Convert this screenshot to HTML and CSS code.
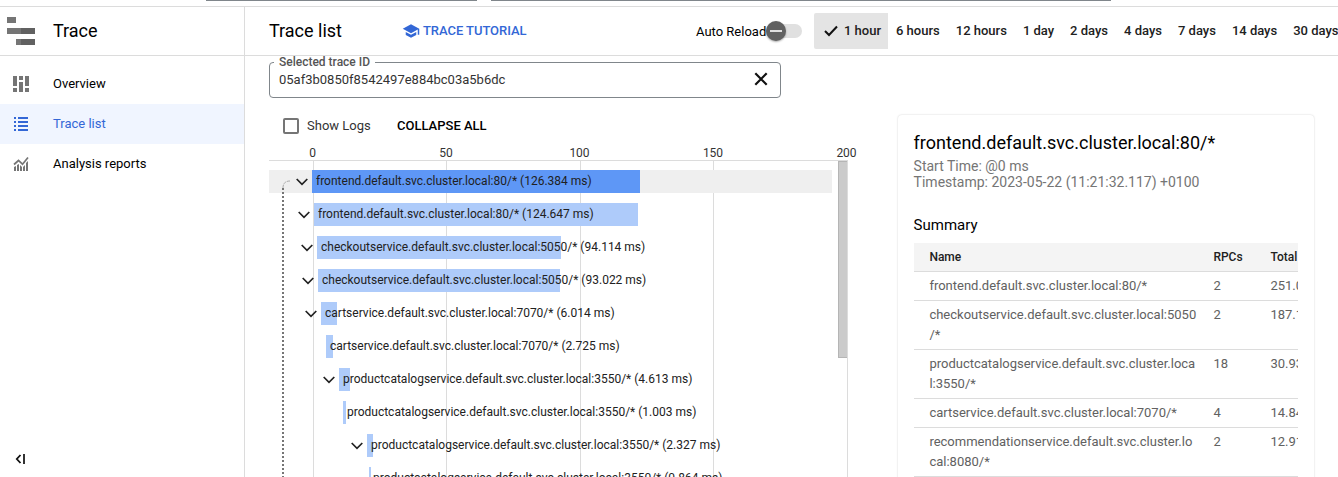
FILE: index.html
```html
<!DOCTYPE html>
<html lang="en">
<head>
<meta charset="utf-8">
<title>Trace list</title>
<link rel="stylesheet" href="styles.css">
</head>
<body>
<div class="topbar"><span class="topbar-project"></span><span class="topbar-search"></span></div>
<div class="shell">
  <nav class="sidebar">
    <div class="product">
      <svg class="product-logo" width="28" height="28" shape-rendering="crispEdges"><path fill="#757575" d="M0 0h9v6H0zM0 11h14v6H0zM9 22h5v6H9z"/><path fill="#616161" d="M14 11h14v6H14zM14 22h14v6H14z"/></svg>
      <span>Trace</span>
    </div>
    <ul class="nav">
      <li class="nav-item">
        <svg width="16" height="16" fill="#757575" shape-rendering="crispEdges"><path d="M0 0h4v10H0zM0 12h4v4H0zM6 0h4v4H6zM6 6h4v10H6zM12 0h4v10h-4zM12 12h4v4h-4z"/></svg>
        <span>Overview</span>
      </li>
      <li class="nav-item active">
        <svg width="16" height="16" fill="#3367d6" shape-rendering="crispEdges"><path d="M1 1h2v2H1zM5 1h10v2H5zM1 5h2v2H1zM5 5h10v2H5zM1 9h2v2H1zM5 9h10v2H5zM1 13h2v2H1zM5 13h10v2H5z"/></svg>
        <span>Trace list</span>
      </li>
      <li class="nav-item">
        <svg width="16" height="16" fill="#757575"><path d="M1 11l2-1v5H1zM4 9l2-1v7H4zM7 9l2 2v4H7zM10 11l2-2v6h-2zM13 7l2-2v10h-2z"/><path d="M1 8.500l4.500-4 4 3.700L15 1.500" fill="none" stroke="#757575" stroke-width="1.700"/></svg>
        <span>Analysis reports</span>
      </li>
    </ul>
    <svg class="collapse" width="12" height="10"><path d="M5.500 1L1.800 5l3.700 4" fill="none" stroke="#111" stroke-width="1.800"/><path d="M8 0h2v10H8z" fill="#333"/></svg>
  </nav>
  <main class="main">
    <header class="header">
      <h1>Trace list</h1>
      <a class="tutorial">
        <svg width="18" height="18" viewBox="0 0 24 24" fill="#3367d6"><path d="M5 13.180v4L12 21l7-3.820v-4L12 17l-7-3.820zM12 3L1 9l11 6 9-4.910V17h2V9L12 3z"/></svg>
        <span>TRACE TUTORIAL</span>
      </a>
      <span class="reload">Auto Reload</span>
      <span class="toggle"><span class="knob"></span></span>
      <div class="ranges">
        <span class="range selected"><svg width="14" height="12"><path d="M1 6l4 4 8-8.500" fill="none" stroke="#111" stroke-width="2"/></svg>1 hour</span>
        <span class="range">6 hours</span><span class="range">12 hours</span><span class="range">1 day</span><span class="range">2 days</span><span class="range">4 days</span><span class="range">7 days</span><span class="range">14 days</span><span class="range">30 days</span>
      </div>
    </header>
    <div class="content">
      <section class="trace">
        <fieldset class="field">
          <legend>Selected trace ID</legend>
          <span>05af3b0850f8542497e884bc03a5b6dc</span>
          <svg width="14" height="14"><path d="M1.300 1.300l11.400 11.400M12.700 1.300L1.300 12.700" stroke="#111" stroke-width="2.200"/></svg>
        </fieldset>
        <div class="options"><span class="checkbox"></span><span class="logs">Show Logs</span><span class="collapse-all">COLLAPSE ALL</span></div>
        <div class="axis"><span>0</span><span>50</span><span>100</span><span>150</span><span>200</span></div>
        <div class="chart">
          <div class="rows">
            <div class="row current"><span class="lead" style="width:43px"><svg class="chev"><use href="#chev"/></svg></span><span class="bar" style="width:328px">frontend.default.svc.cluster.local:80/* (126.384 ms)</span></div>
            <div class="row"><span class="lead" style="width:45px"><svg class="chev"><use href="#chev"/></svg></span><span class="bar" style="width:324px">frontend.default.svc.cluster.local:80/* (124.647 ms)</span></div>
            <div class="row"><span class="lead" style="width:48px"><svg class="chev"><use href="#chev"/></svg></span><span class="bar" style="width:244px">checkoutservice.default.svc.cluster.local:5050/* (94.114 ms)</span></div>
            <div class="row"><span class="lead" style="width:49px"><svg class="chev"><use href="#chev"/></svg></span><span class="bar" style="width:242px">checkoutservice.default.svc.cluster.local:5050/* (93.022 ms)</span></div>
            <div class="row"><span class="lead" style="width:52px"><svg class="chev"><use href="#chev"/></svg></span><span class="bar" style="width:16px">cartservice.default.svc.cluster.local:7070/* (6.014 ms)</span></div>
            <div class="row"><span class="lead" style="width:57px"></span><span class="bar" style="width:7px">cartservice.default.svc.cluster.local:7070/* (2.725 ms)</span></div>
            <div class="row"><span class="lead" style="width:70px"><svg class="chev"><use href="#chev"/></svg></span><span class="bar" style="width:11px">productcatalogservice.default.svc.cluster.local:3550/* (4.613 ms)</span></div>
            <div class="row"><span class="lead" style="width:74px"></span><span class="bar narrow" style="width:3px">productcatalogservice.default.svc.cluster.local:3550/* (1.003 ms)</span></div>
            <div class="row"><span class="lead" style="width:98px"><svg class="chev"><use href="#chev"/></svg></span><span class="bar" style="width:6px">productcatalogservice.default.svc.cluster.local:3550/* (2.327 ms)</span></div>
            <div class="row"><span class="lead" style="width:100px"></span><span class="bar narrow" style="width:2px">productcatalogservice.default.svc.cluster.local:3550/* (0.864 ms)</span></div>
          </div>
          <span class="scroll-thumb"></span>
          <svg class="connector" width="10" height="300"><path d="M9 1Q2 1 2 8" fill="none" stroke="#aaa" stroke-dasharray="3 1"/><path d="M2 8V300" stroke="#757575" stroke-width="2" stroke-dasharray="2 2"/></svg>
        </div>
      </section>
      <aside class="details">
        <h2>frontend.default.svc.cluster.local:80/*</h2>
        <p class="meta">Start Time: @0 ms<br>Timestamp: 2023-05-22 (11:21:32.117) +0100</p>
        <h3>Summary</h3>
        <div class="table">
          <div class="tr th"><span>Name</span><span>RPCs</span><span>Total</span></div>
          <div class="tr"><span>frontend.default.svc.cluster.local:80/*</span><span>2</span><span>251.031</span></div>
          <div class="tr"><span>checkoutservice.default.svc.cluster.local:5050/*</span><span>2</span><span>187.136</span></div>
          <div class="tr"><span>productcatalogservice.default.svc.cluster.local:3550/*</span><span>18</span><span>30.930</span></div>
          <div class="tr"><span>cartservice.default.svc.cluster.local:7070/*</span><span>4</span><span>14.840</span></div>
          <div class="tr"><span>recommendationservice.default.svc.cluster.local:8080/*</span><span>2</span><span>12.910</span></div>
        </div>
      </aside>
    </div>
  </main>
</div>
<svg class="defs" width="0" height="0"><symbol id="chev" viewBox="0 0 12 8"><path d="M.700 1L6 6.300 11.300 1" fill="none" stroke="#212121" stroke-width="1.700"/></symbol></svg>
</body>
</html>
```
FILE: styles.css
```css
* { box-sizing: border-box; }
body { margin: 0; width: 1338px; height: 477px; overflow: hidden; background: #fff; color: #000; font: 13px/16px Roboto, sans-serif; white-space: nowrap; }
svg { display: block; flex: none; }
.defs { position: absolute; }
.topbar { height: 7px; border-bottom: 1px solid #dcdcdc; display: flex; gap: 14px; padding-left: 206px; }
.topbar-project, .topbar-search { height: 1px; background: #80868b; }
.topbar-project { width: 271px; }
.topbar-search { width: 620px; }
.shell { display: flex; height: 470px; }
.sidebar { width: 245px; flex: none; border-right: 1px solid #dcdcdc; display: flex; flex-direction: column; }
.product { height: 49px; border-bottom: 1px solid #dcdcdc; display: flex; align-items: center; padding-left: 7px; gap: 18px; font-size: 18px; }
.nav { list-style: none; margin: 8px 0 0; padding: 0; }
.nav-item { height: 40px; display: flex; align-items: center; padding-left: 13px; gap: 24px; }
.active { background: #f0f5ff; color: #3367d6; }
.collapse { margin: auto 0 13px 15px; }
.main { width: 1093px; flex: none; overflow: hidden; }
.header { height: 49px; border-bottom: 1px solid #dcdcdc; display: flex; align-items: center; padding-left: 24px; }
h1 { font-size: 18px; font-weight: 400; margin: 0; width: 133px; flex: none; }
.tutorial { display: flex; align-items: center; gap: 3px; color: #3367d6; font-weight: 500; width: 294px; flex: none; letter-spacing: -.05px; }
.reload { width: 70px; padding-top: 1px; flex: none; }
.toggle { width: 36px; height: 14px; border-radius: 7px; background: #e0e0e0; display: flex; align-items: center; flex: none; }
.knob { width: 20px; height: 20px; border-radius: 50%; background: #616161; box-shadow: 0 1px 2px #0005; flex: none; display: flex; align-items: center; justify-content: center; }
.knob::after { content: ""; width: 12px; height: 2px; background: #e0e0e0; }
.ranges { display: flex; margin-left: 12px; font-weight: 500; color: #212121; flex: none; }
.range { height: 36px; display: flex; align-items: center; padding: 0 8px; flex: none; }
.selected { background: #e4e4e4; border-radius: 2px 0 0 2px; padding-left: 10px; gap: 6px; width: 74px; }
.content { display: flex; height: 421px; }
.trace { width: 579px; margin-left: 24px; flex: none; }
.field { margin: -1px 0 0; width: 512px; height: 43px; border: 1px solid #80868b; border-radius: 4px; padding: 3px 12px 0 9px; display: flex; justify-content: space-between; color: #333; }
.field legend { font-size: 12px; line-height: 14px; font-weight: 500; padding: 0 5px; margin-left: -5px; color: #555; }
.options { display: flex; align-items: center; height: 16px; margin: 20px 0 19px 14px; }
.checkbox { width: 16px; height: 16px; border: 2px solid #757575; border-radius: 2px; margin-right: 8px; }
.logs { width: 90px; color: #333; }
.collapse-all { font-weight: 500; }
.axis { display: grid; grid-template-columns: 133px 134px 133px 134px 133px; margin-left: -23px; width: 667px; height: 7px; font-size: 12px; line-height: 0; text-align: center; color: #333; }
.chart { position: relative; height: 317px; border-top: 1px solid #dcdcdc; background: linear-gradient(#dcdcdc, #dcdcdc) 44px 0/1px 100% no-repeat, linear-gradient(#dcdcdc, #dcdcdc) 177px 0/1px 100% no-repeat, linear-gradient(#dcdcdc, #dcdcdc) 311px 0/1px 100% no-repeat, linear-gradient(#dcdcdc, #dcdcdc) 444px 0/1px 100% no-repeat, linear-gradient(#dcdcdc, #dcdcdc) 578px 0/1px 100% no-repeat; }
.rows { display: flex; flex-direction: column; gap: 10px; width: 563px; padding-top: 9px; }
.row { display: flex; height: 23px; flex: none; font-size: 12px; line-height: 22px; color: #212121; }
.current { background: #efefef; }
.lead { flex: none; display: flex; justify-content: flex-end; align-items: center; padding-right: 4px; }
.chev { width: 12px; height: 8px; }
.bar { flex: none; background: #aecbfa; text-indent: 4px; }
.current .bar { background: #5e97f6; }
.scroll-thumb { position: absolute; left: 569px; top: 0; width: 9px; height: 197px; background: #cbcbcb; border: 1px solid #b5b5b5; border-right: 0; }
.connector { position: absolute; left: 12px; top: 19px; }
.details { width: 416px; height: 380px; flex: none; margin: 59px 0 0 50px; border-radius: 4px; padding: 17px 16px 0 15.600px; box-shadow: 0 0 2px #0003; }
h2 { font-size: 18px; line-height: 22px; font-weight: 400; margin: 0 0 4px; }
.meta { font-size: 14px; line-height: 16px; color: #757575; margin: 0; }
h3 { font-size: 15px; line-height: 20px; font-weight: 400; margin: 25px 0 8px; }
.table { overflow: hidden; }
.tr { display: grid; grid-template-columns: 268px 41px 27px; column-gap: 16px; padding: 4px 0 4px 15.800px; border-bottom: 1px solid #dcdcdc; line-height: 20px; color: #616161; font-size: 13px; }
.tr span { overflow-wrap: anywhere; white-space: normal; }
.tr span:last-child { white-space: nowrap; }
.th { background: #f4f4f4; color: #212121; font-weight: 500; font-size: 12px; }
```
